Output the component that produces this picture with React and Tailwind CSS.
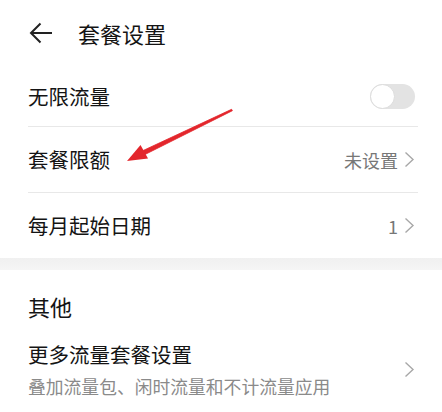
import React from "react";

const font = { fontFamily: '"Noto Sans CJK SC", "Noto Sans", sans-serif' };

function Chevron() {
  return (
    <svg width="11" height="17" viewBox="0 0 11 17" className="ml-[6px]">
      <path d="M1.5 1.5 L9 8.5 L1.5 15.5" fill="none" stroke="#a8a8a8" strokeWidth="1.4" />
    </svg>
  );
}

function Toggle() {
  return (
    <div className="relative w-[45px] h-[25px] rounded-full bg-[#e3e3e3]">
      <div className="absolute left-0 top-0 w-[25px] h-[25px] rounded-full bg-white border border-[#dcdcdc]" />
    </div>
  );
}

export default function App() {
  return (
    <div className="relative w-[442px] h-[412px] bg-white overflow-hidden text-[#141414]" style={font}>
      {/* HEADER */}
      <div className="flex items-center h-[66px]">
        <svg width="24" height="22" viewBox="0 0 24 22" className="ml-[29px]">
          <path d="M23 11 H2 M11.5 1.5 L2 11 L11.5 20.5" fill="none" stroke="#222" strokeWidth="2" />
        </svg>
        <span className="ml-[25px] text-[22px] leading-none">套餐设置</span>
      </div>

      {/* MAIN SETTINGS */}
      <div className="pl-[28px] pr-[24px]">
        <div className="flex items-center justify-between h-[61px] border-b border-[#e8e8e8]">
          <span className="text-[20.5px] leading-none">无限流量</span>
          <div className="mr-[3px] mt-[1px]">
            <Toggle />
          </div>
        </div>

        <div className="flex items-center justify-between h-[66px] border-b border-[#e8e8e8]">
          <span className="text-[20.5px] leading-none">套餐限额</span>
          <div className="flex items-center mr-[3px]">
            <span className="text-[18px] leading-none text-[#777]">未设置</span>
            <Chevron />
          </div>
        </div>

        <div className="flex items-center justify-between h-[65px]">
          <span className="text-[20.5px] leading-none">每月起始日期</span>
          <div className="flex items-center mr-[3px]">
            <span className="text-[18px] leading-none text-[#777]">1</span>
            <Chevron />
          </div>
        </div>
      </div>

      {/* GAP BAND */}
      <div className="h-[12px] bg-gradient-to-b from-[#f0f0f0] to-[#f5f5f5]" />

      {/* OTHER */}
      <div className="pl-[28px] pr-[24px]">
        <div className="flex items-center h-[72px]">
          <span className="text-[22px] leading-none">其他</span>
        </div>
        <div className="flex items-center justify-between pt-[2px]">
          <div className="flex flex-col">
            <span className="text-[20.5px] leading-none">更多流量套餐设置</span>
            <span className="text-[17.8px] leading-none text-[#8a8a8a] mt-[13px]">
              叠加流量包、闲时流量和不计流量应用
            </span>
          </div>
          <div className="mr-[3px]">
            <Chevron />
          </div>
        </div>
      </div>

      {/* RED ANNOTATION ARROW */}
      <svg className="absolute left-0 top-0" width="442" height="412" viewBox="0 0 442 412">
        <polygon
          points="232.4,110.7 231.6,109.3 141,151.5 143,155.5"
          fill="#e3262c"
          stroke="#e3262c"
          strokeWidth="0.8"
          strokeLinejoin="round"
        />
        <polygon points="127,161 140.5,145 148,158.5" fill="#e3262c" />
      </svg>
    </div>
  );
}
